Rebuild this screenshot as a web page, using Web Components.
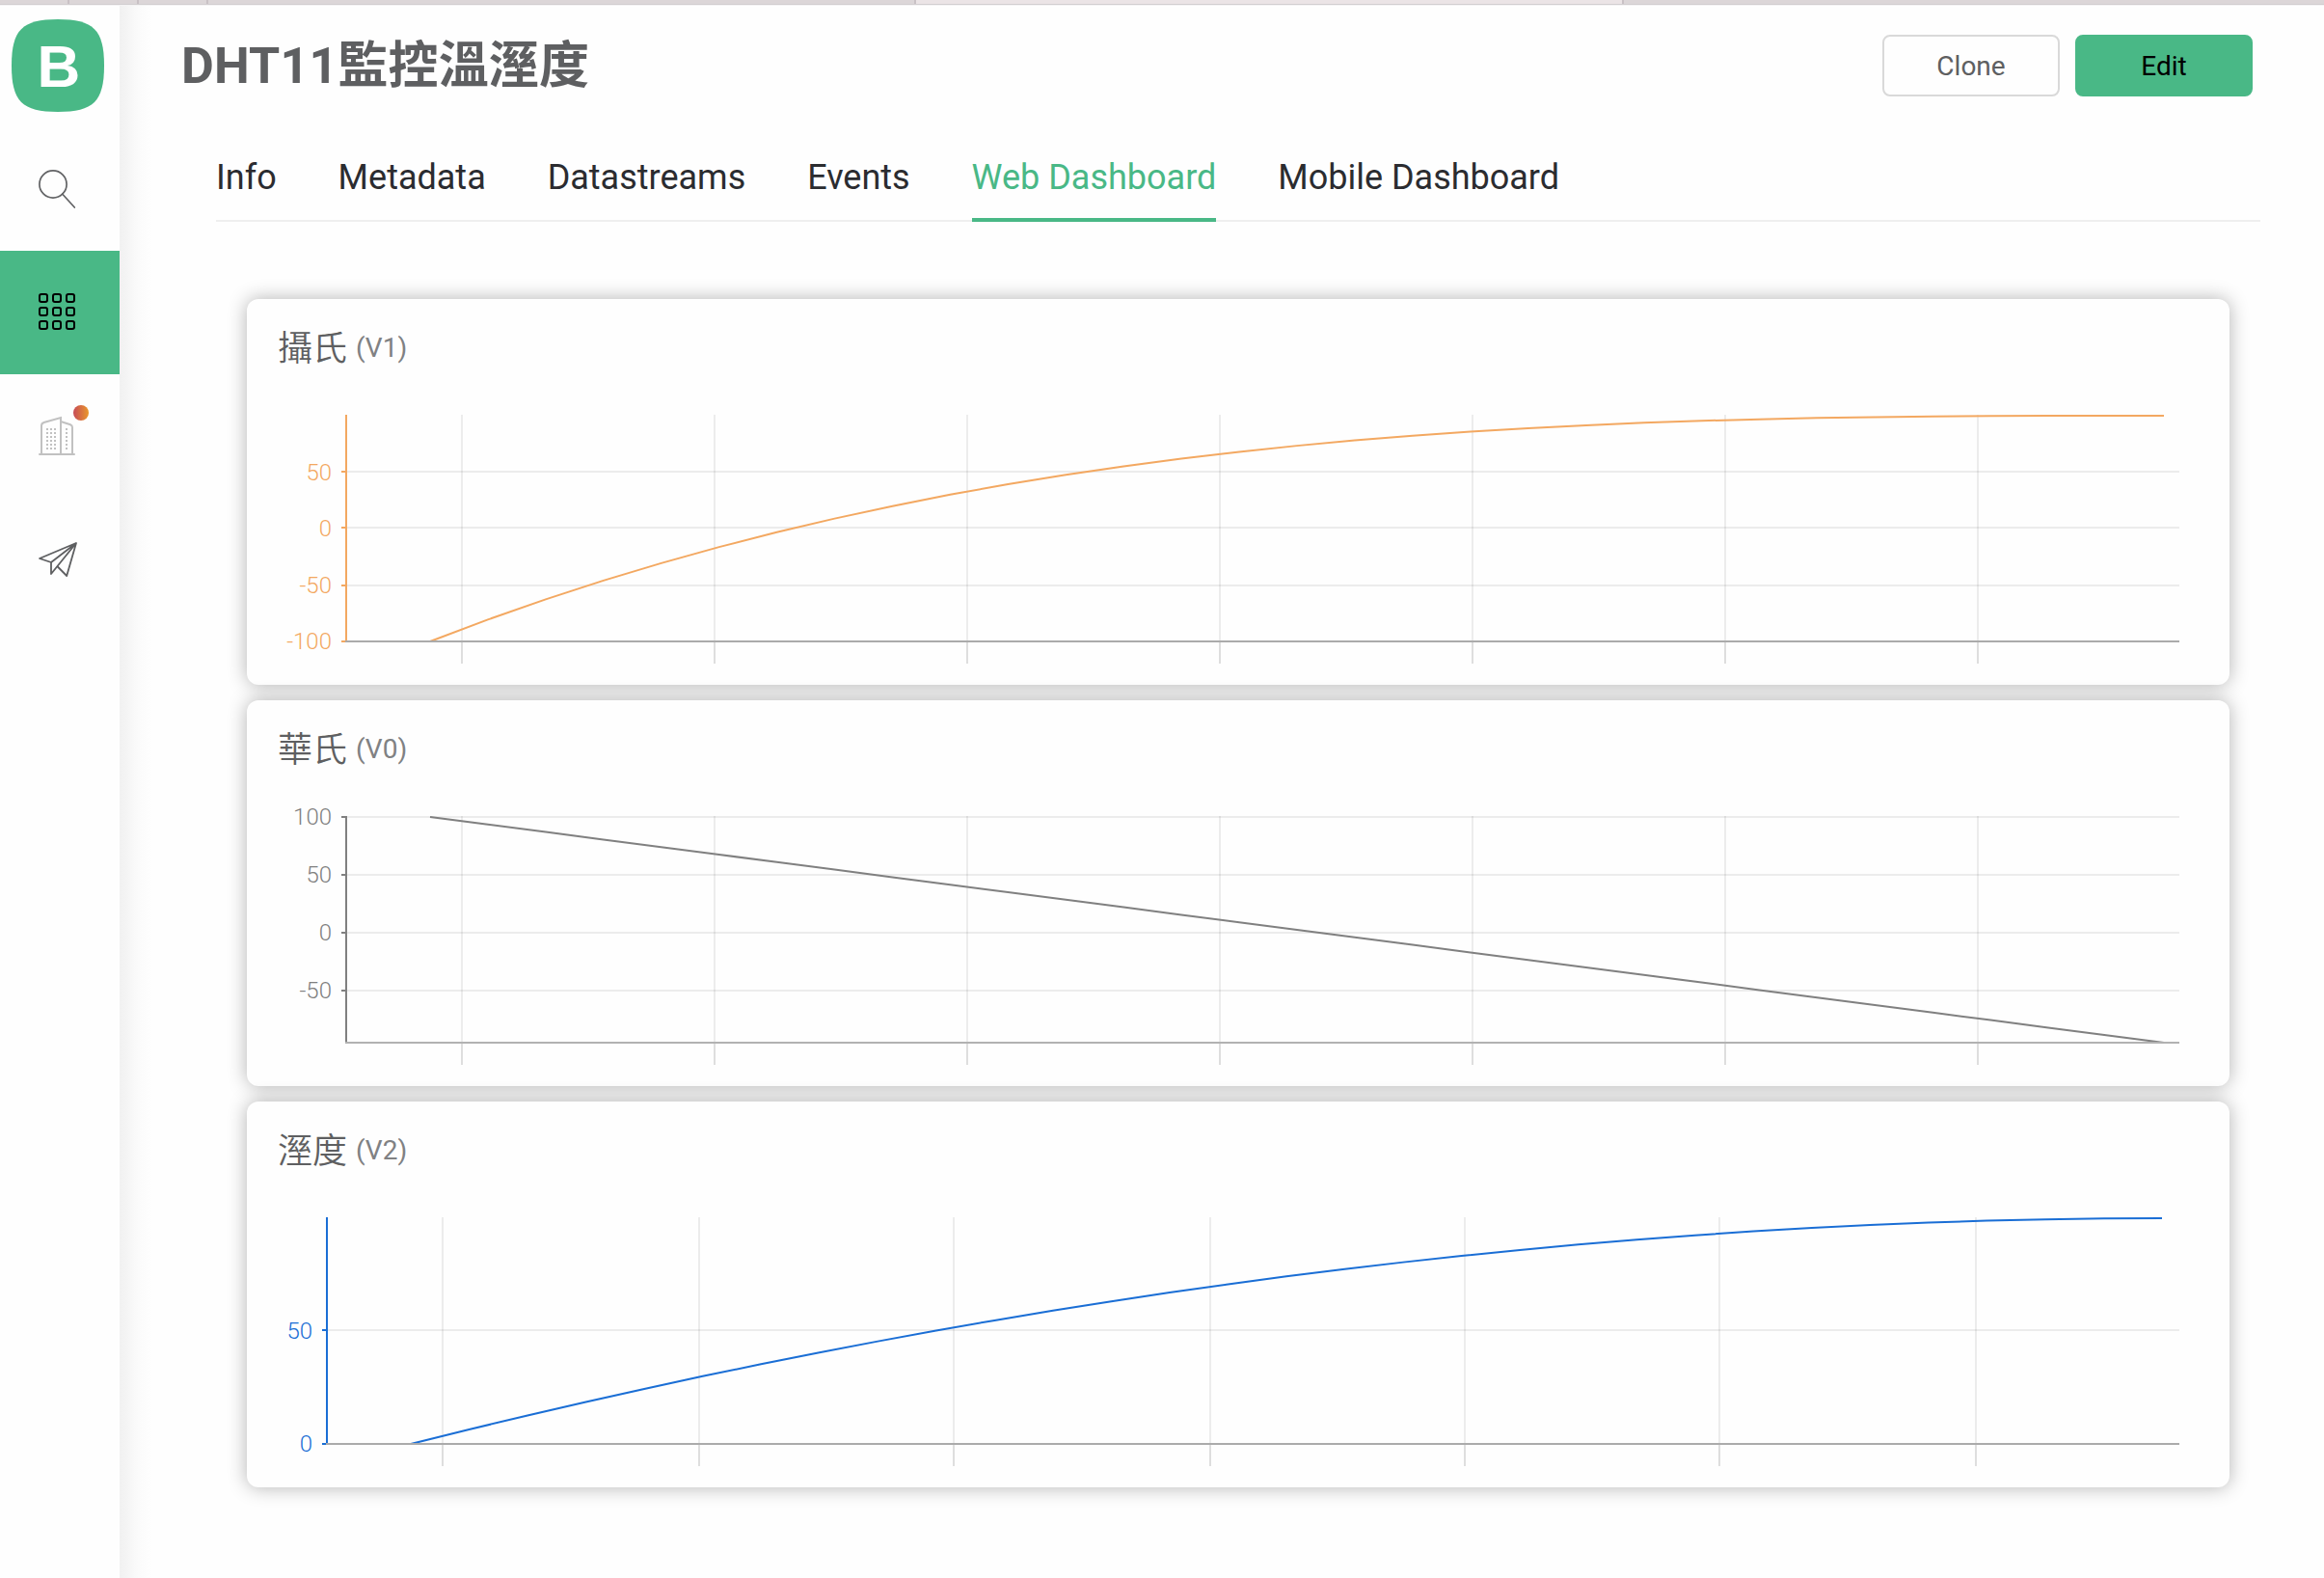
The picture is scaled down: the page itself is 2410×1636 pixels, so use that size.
<!DOCTYPE html>
<html lang="zh-Hant">
<head>
<meta charset="utf-8">
<title>DHT11監控溫溼度</title>
<style>
html,body{margin:0;height:100%;overflow:hidden;background:#fefefe}
body{font-family:Roboto,"Noto Sans CJK TC",sans-serif;color:#5e5f61}
</style>
</head>
<body>
<app-shell>
  <browser-strip slot="top"></browser-strip>
  <side-nav slot="nav">
    <nav-item>
      <svg viewBox="0 132 124 128" fill="none" stroke="#626365" stroke-width="1.7" stroke-linecap="round"><circle cx="55" cy="191" r="14.1"/><path d="M64.8 201.2 77.3 215"/></svg>
    </nav-item>
    <nav-item active>
      <svg viewBox="0 260 124 128" fill="none" stroke="#000" stroke-width="2">
        <rect x="41" y="305" width="8" height="8" rx="2"/><rect x="55" y="305" width="8" height="8" rx="2"/><rect x="69" y="305" width="8" height="8" rx="2"/>
        <rect x="41" y="319" width="8" height="8" rx="2"/><rect x="55" y="319" width="8" height="8" rx="2"/><rect x="69" y="319" width="8" height="8" rx="2"/>
        <rect x="41" y="333" width="8" height="8" rx="2"/><rect x="55" y="333" width="8" height="8" rx="2"/><rect x="69" y="333" width="8" height="8" rx="2"/>
      </svg>
    </nav-item>
    <nav-item>
      <svg viewBox="0 388 124 128" fill="none" stroke="#c1c1c1" stroke-width="2">
        <defs><linearGradient id="dot" x1="0" x2="1"><stop offset="0" stop-color="#c64b57"/><stop offset="1" stop-color="#ea972a"/></linearGradient></defs>
        <path d="M41 471H77" stroke-linecap="round"/><path d="M43 471V441.5Q43 438.8 45.5 438L63 433V471M63 437 73 440.2Q75 441 75 443V471"/>
        <path stroke-dasharray="2 2" d="M49 444V467M53 444V467M57 444V467M69 444V467"/>
        <circle cx="84" cy="428" r="8" fill="url(#dot)" stroke="none"/>
      </svg>
    </nav-item>
    <nav-item>
      <svg viewBox="0 516 124 128" fill="none" stroke="#5e5f61" stroke-width="1.8" stroke-linejoin="round"><path d="M79 563 41 579 53 583ZM53 583V595L79 563M59.8 587.5 69.2 597 79 563"/></svg>
    </nav-item>
  </side-nav>
  <page-header>DHT11監控溫溼度
    <ui-button slot="actions">Clone</ui-button>
    <ui-button slot="actions" primary>Edit</ui-button>
  </page-header>
  <tab-bar>
    <tab-item>Info</tab-item><tab-item>Metadata</tab-item><tab-item>Datastreams</tab-item><tab-item>Events</tab-item><tab-item active>Web Dashboard</tab-item><tab-item>Mobile Dashboard</tab-item>
  </tab-bar>
  <widget-list>
    <chart-card color="#f3a861" pin="(V1)" axis="103" curve="cubic" span="190 1988" rows="79:50:9 137:0:9 197:-50:8 255:-100:8" cols="223 485 747 1009 1271 1533 1795">攝氏</chart-card>
    <chart-card color="#808080" pin="(V0)" axis="103" curve="fall" span="190 1988" rows="21:100:8 81:50:8 141:0:8 201:-50:8" cols="223 485 747 1009 1271 1533 1795">華氏</chart-card>
    <chart-card color="#1a6ed5" pin="(V2)" axis="83" curve="square" span="170 1986" rows="137:50:9 255:0:8" cols="203 469 733 999 1263 1527 1793">溼度</chart-card>
  </widget-list>
</app-shell>
<script>
const define = (name, html, setup) => customElements.define(name, class extends HTMLElement {
  constructor() {
    super();
    this.attachShadow({ mode: 'open' }).innerHTML = html;
  }
  connectedCallback() { if (setup) setup(this, this.shadowRoot); }
});

define('app-shell', `<style>
:host{display:flex;flex-direction:column;height:100vh}
.row{display:flex;flex:1;min-height:0}
main{flex:1;min-width:0;background:linear-gradient(90deg,#f1f1f1 0,#f4f4f4 7px,#f9f9f9 15px,#fcfcfc 23px,#fefefe 34px)}
</style><slot name="top"></slot><div class="row"><slot name="nav"></slot><main><slot></slot></main></div>`);

define('browser-strip', `<style>
:host{display:flex;height:4px;flex:none;border-bottom:1px solid #d2ced0;box-shadow:0 1px #f4f3f4;background:#dcd6d8;z-index:1}
i{box-sizing:border-box;border-right:2px solid #c9c1c5}
.on{background:#ebe4e6}
</style><i style="width:72px"></i><i style="width:72px"></i><i style="width:72px"></i><i style="width:734px"></i><i class="on" style="width:734px"></i>`);

define('side-nav', `<style>
:host{display:flex;flex-direction:column;width:124px;flex:none;background:#fefefe}
.logo{height:127px;flex:none;display:flex}
svg{width:124px;height:127px}
text{font:bold 62px "Liberation Sans",sans-serif;fill:#fff}
</style><div class="logo"><svg viewBox="0 5 124 127"><path fill="#49b886" d="M60 20C97 20 108 31 108 68S97 116 60 116 12 105 12 68 23 20 60 20Z"/><text x="38.5" y="90">B</text></svg></div><slot></slot>`);

define('nav-item', `<style>
:host{display:flex;height:128px;flex:none}
:host([active]){background:#49b886}
::slotted(svg){width:124px;height:128px}
</style><slot></slot>`);

define('page-header', `<style>
:host{display:flex;justify-content:space-between;align-items:center;height:64px;padding:31px 74px 0 64px}
h1{margin:0;padding-top:2px;font-size:52px;font-weight:700;line-height:64px;letter-spacing:.15px;white-space:nowrap}
div{display:flex;gap:16px}
</style><h1><slot></slot></h1><div><slot name="actions"></slot></div>`);

define('ui-button', `<style>
:host{display:flex;box-sizing:border-box;width:184px;height:64px;border:2px solid #d9d9d9;border-radius:8px;align-items:center;justify-content:center;font-size:28px;line-height:33px;background:#fefefe}
:host([primary]){background:#49b886;border-color:#49b886;color:#000}
</style><slot></slot>`);

define('tab-bar', `<style>
:host{display:flex;gap:63.9px;box-sizing:border-box;height:80px;margin:50px 66px 0 100px;box-shadow:inset 0 -2px #efefef}
</style><slot></slot>`);

define('tab-item', `<style>
:host{display:flex;align-items:center;box-sizing:border-box;height:80px;padding-bottom:12px;font-size:36px;line-height:42px;color:#2b2c30;white-space:nowrap}
:host([active]){color:#49b886;box-shadow:inset 0 -4px #49b886}
</style><slot></slot>`);

define('widget-list', `<style>
:host{display:flex;flex-direction:column;gap:16px;margin:80px 98px 0 132px}
</style><slot></slot>`);

define('chart-card', `<style>
:host{display:flex;flex-direction:column;height:400px;border-radius:12px;background:#fefefe;box-shadow:0 0 20px rgba(0,0,0,.3)}
header{display:flex;align-items:flex-start;gap:8px;height:75px;padding:25px 32px 0;font-size:36px}
span{font-family:"Noto Sans CJK TC DemiLight","Noto Sans CJK TC",sans-serif;font-weight:400;line-height:47px}
small{font-size:28px;line-height:51px;color:#808183;padding-left:1px}
svg{display:block;width:2056px;height:300px}
text{font:300 24px "Roboto Light",Roboto,sans-serif;text-anchor:end}
</style><header><span><slot></slot></span><small></small></header><svg viewBox="0 0 2056 300"></svg>`, (el, root) => {
  const get = n => el.getAttribute(n), color = get('color'), axis = +get('axis');
  root.querySelector('small').textContent = get('pin');
  const rows = get('rows').split(' ').map(r => r.split(':'));
  let out = '';
  for (const x of get('cols').split(' '))
    out += `<path d="M${x} 20V256" stroke="#000" stroke-opacity=".07"/><path d="M${x} 256V278" stroke="#000" stroke-opacity=".125"/>`;
  for (const [y, label, dy] of rows) {
    if (y !== '255') out += `<path d="M${axis + 1} ${y}H2004" stroke="#000" stroke-opacity=".07"/>`;
    out += `<path d="M${axis - 5} ${y}H${axis + 1}" stroke="${color}"/><text x="${axis - 15}" y="${+y + +dy}" fill="${color}">${label}</text>`;
  }
  out += `<path d="M${axis} 20V256" stroke="${color}"/>`;
  const ease = {
    cubic: t => (1 - t) ** (3 - .18 * t),
    square: t => (1 - t) ** 1.955,
    fall: t => t
  }[get('curve')];
  const [a, b] = get('span').split(' ').map(Number), pts = [];
  for (let i = 0; i <= 30; i++) {
    const t = i / 30;
    pts.push((a + (b - a) * t).toFixed(1) + ',' + (21 + 234 * ease(t)).toFixed(2));
  }
  out += `<polyline points="${pts.join(' ')}" stroke="${color}"/><path d="M${axis - 1} 255H2004" stroke="#${get('curve') === 'fall' ? 'b0b0b0' : 'a9a9a9'}" stroke-opacity=".98"/>`;
  const svg = root.querySelector('svg');
  svg.innerHTML = `<g fill="none" stroke-width="2">${out}</g>`;
});
</script>
</body>
</html>
